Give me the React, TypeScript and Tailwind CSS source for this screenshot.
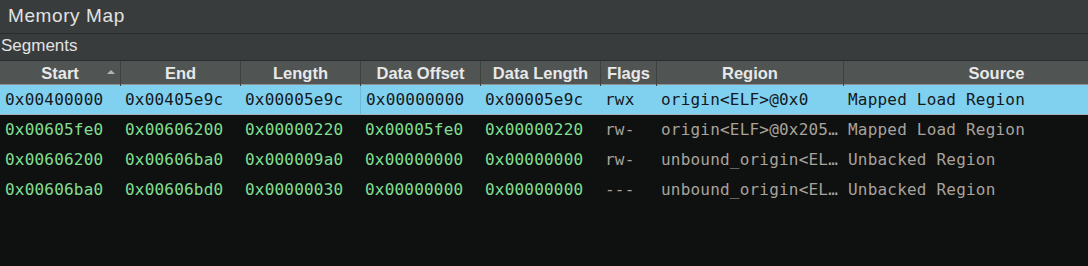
const cols = "grid grid-cols-[120px_120px_120px_120px_120px_56px_187px_306px]";

const headers = ["Start", "End", "Length", "Data Offset", "Data Length", "Flags", "Region", "Source"];

const rows = [
  ["0x00400000", "0x00405e9c", "0x00005e9c", "0x00000000", "0x00005e9c", "rwx", "origin<ELF>@0x0", "Mapped Load Region"],
  ["0x00605fe0", "0x00606200", "0x00000220", "0x00005fe0", "0x00000220", "rw-", "origin<ELF>@0x205…", "Mapped Load Region"],
  ["0x00606200", "0x00606ba0", "0x000009a0", "0x00000000", "0x00000000", "rw-", "unbound_origin<EL…", "Unbacked Region"],
  ["0x00606ba0", "0x00606bd0", "0x00000030", "0x00000000", "0x00000000", "---", "unbound_origin<EL…", "Unbacked Region"],
];

export default function App() {
  return (
    <div className="w-[1088px] h-[266px] flex flex-col bg-[#0f1110] font-['Liberation_Sans',Arial,sans-serif] overflow-hidden">
      {/* title */}
      <div className="h-[34px] shrink-0 bg-[#393c3d] border-b border-[#2a2c2d] flex items-center px-2 pb-px">
        <span className="text-[19px] tracking-[0.6px] text-[#e2e2e2]">Memory Map</span>
      </div>

      {/* section label */}
      <div className="h-[27px] shrink-0 bg-[#393c3d] border-b border-[#2a2c2d] flex items-center px-px pb-0.5">
        <span className="text-[17px] text-[#e2e2e2]">Segments</span>
      </div>

      {/* header */}
      <div className={`${cols} h-[24px] shrink-0 bg-[#505453] border-b border-[#8e9090]`}>
        {headers.map((h, i) => (
          <div
            key={h}
            className={`relative flex items-center justify-center font-bold text-[16.5px] text-[#e8e8e8] ${
              i > 0 ? "border-l border-[#3d4140]" : ""
            }`}
          >
            {h}
            {i === 0 && (
              <span className="absolute right-[5px] top-[9px] w-0 h-0 border-l-[4px] border-r-[4px] border-b-[4px] border-l-transparent border-r-transparent border-b-[#b4b4b4]" />
            )}
          </div>
        ))}
      </div>

      {/* rows */}
      <div className="flex-1 font-['DejaVu_Sans_Mono',monospace] text-[16px] tracking-[0.2px]">
        {rows.map((r, ri) => {
          const sel = ri === 0;
          return (
            <div
              key={ri}
              className={`${cols} h-[30px] ${
                sel ? "bg-[#80d0f0] border-b border-[#a8b0b4] text-[#15191b]" : ""
              }`}
            >
              {r.map((c, ci) => (
                <div
                  key={ci}
                  className={`flex items-center pl-[5px] whitespace-nowrap overflow-hidden ${
                    sel && ci === 3 ? "border-l border-[#6fb8d6]" : ""
                  } ${sel ? "" : ci < 5 ? "text-[#80df90]" : "text-[#a8a29c]"}`}
                >
                  {c}
                </div>
              ))}
            </div>
          );
        })}
      </div>
    </div>
  );
}
